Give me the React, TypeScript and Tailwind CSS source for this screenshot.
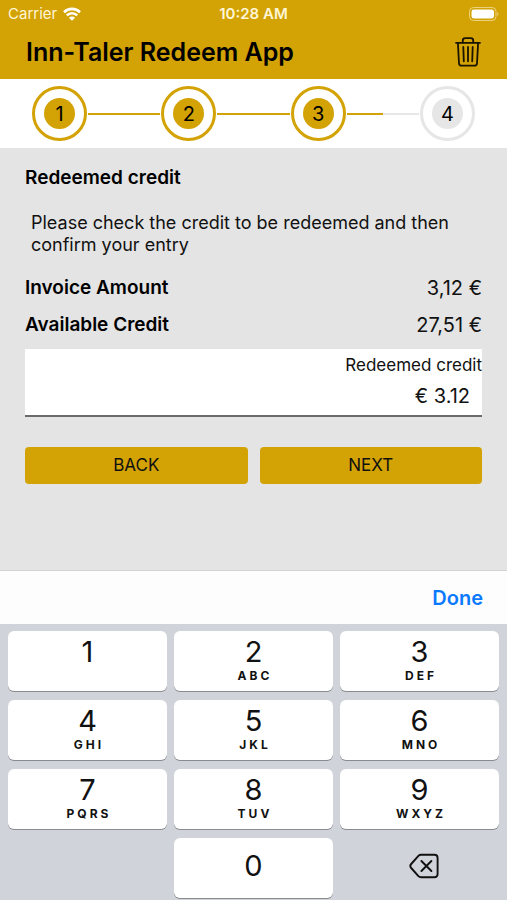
import { Fragment } from 'react'

const KEYS = [
  { digit: '1', letters: '' },
  { digit: '2', letters: 'ABC' },
  { digit: '3', letters: 'DEF' },
  { digit: '4', letters: 'GHI' },
  { digit: '5', letters: 'JKL' },
  { digit: '6', letters: 'MNO' },
  { digit: '7', letters: 'PQRS' },
  { digit: '8', letters: 'TUV' },
  { digit: '9', letters: 'WXYZ' },
]

const STEPS = [
  { n: 1, done: true },
  { n: 2, done: true },
  { n: 3, done: true },
  { n: 4, done: false },
]

function StatusBar() {
  return (
    <div className="grid grid-cols-3 items-center h-7 px-2 text-[15px] text-[#fff6d6]">
      <div className="flex items-center gap-[6px]">
        <span>Carrier</span>
        <svg width="18" height="14" viewBox="0 0 18 14" fill="none" stroke="#fff" strokeWidth="2.6">
          <path d="M1 5.2a11.4 11.4 0 0 1 16 0" />
          <path d="M3.8 8.4a7.3 7.3 0 0 1 10.4 0" />
          <path d="M9 13.8 5.9 10.7a4.4 4.4 0 0 1 6.200 0z" fill="#fff" stroke="none" />
        </svg>
      </div>
      <span className="text-center font-semibold whitespace-nowrap">10:28 AM</span>
      <svg className="justify-self-end" width="30" height="14" viewBox="0 0 30 14">
        <rect x="0.5" y="0.5" width="26.5" height="13" rx="4" fill="none" stroke="#ecd27e" />
        <rect x="2.5" y="2.5" width="22.500" height="9" rx="2.4" fill="#fff" />
        <path d="M28.300 5c1.500.6 1.500 3.400 0 4z" fill="#ecd27e" />
      </svg>
    </div>
  )
}

function TrashIcon() {
  return (
    <svg width="26" height="30" viewBox="0 0 26 30" fill="none" stroke="#1a1400" strokeWidth="1.8" strokeLinecap="round" strokeLinejoin="round">
      <path d="M1 5.8h24" />
      <path d="M7.800 5.600V3.600C7.800 2 8.800 1.200 10.200 1.200h5.600c1.400 0 2.400.8 2.400 2.400v2" />
      <path d="M2.900 6 4 26.200c.1 1.700 1 2.500 2.600 2.500h12.800c1.600 0 2.500-.8 2.600-2.500L23.100 6" />
      <path d="M8.300 10 8.800 24.300M13 10v14.300M17.700 10l-.5 14.300" strokeWidth="1.800" />
    </svg>
  )
}

function Stepper() {
  return (
    <ol className="flex items-center bg-white px-8 py-[7px]">
      {STEPS.map((s) => (
        <Fragment key={s.n}>
          {s.n > 1 && (
            <li aria-hidden="true" className="flex flex-1 mx-px">
              <span className="h-[2px] flex-1 bg-[#d3a204]" />
              {!s.done && <span className="h-[2px] flex-1 bg-[#e6e6e6]" />}
            </li>
          )}
          <li
            className={`flex items-center justify-center size-[55px] rounded-full border-3 ${
              s.done ? 'border-[#d3a204]' : 'border-[#e6e6e6]'
            }`}
          >
            <span
              className={`flex items-center justify-center size-[31px] rounded-full text-xl text-black ${
                s.done ? 'bg-[#d3a204]' : 'bg-[#e6e6e6]'
              }`}
            >
              {s.n}
            </span>
          </li>
        </Fragment>
      ))}
    </ol>
  )
}

function Keypad() {
  const key = 'flex flex-col items-center h-[60px] rounded-md bg-white shadow-[0_1px_0_#898b8f]'
  return (
    <div className="grid grid-cols-3 gap-x-[7px] gap-y-[9px] bg-[#d0d3da] px-2 pt-[7px] pb-[2px]">
      {KEYS.map((k) => (
        <button key={k.digit} className={key}>
          <span className="pt-[3px] text-[29px] leading-9">{k.digit}</span>
          <span className="pl-[3px] text-xs leading-3 font-bold tracking-[3px]">{k.letters}</span>
        </button>
      ))}
      <span />
      <button className={`${key} justify-center pb-1`}>
        <span className="text-[29px] leading-9">0</span>
      </button>
      <button aria-label="Delete" className="flex items-center justify-center h-[60px] pl-2 pb-1">
        <svg width="30" height="26" viewBox="0 0 30 26" fill="none" stroke="#111" strokeWidth="1.9" strokeLinecap="round" strokeLinejoin="round">
          <path d="M12 1.800H25.400c2 0 3.200 1.200 3.200 3.200v16c0 2-1.200 3.200-3.200 3.200H12c-1 0-1.900-.4-2.600-1.100L2.200 15c-1.200-1.300-1.200-2.700 0-4l7.200-8.100c.7-.7 1.600-1.100 2.600-1.100z" />
          <path d="m12.400 8 10 10M22.400 8l-10 10" />
        </svg>
      </button>
    </div>
  )
}

export default function App() {
  return (
    <div className="flex flex-col min-h-screen bg-[#e4e4e4] text-[#111] font-['Inter','Liberation_Sans',sans-serif]">
      <header className="bg-[#d3a204]">
        <StatusBar />
        <div className="flex items-center justify-between h-[51px] px-[26px] pb-1">
          <h1 className="text-[25px] leading-8 font-semibold text-black">Inn-Taler Redeem App</h1>
          <button aria-label="Delete entry">
            <TrashIcon />
          </button>
        </div>
      </header>

      <Stepper />

      <main className="flex-1 px-[25px] pt-[18px]">
        <h2 className="text-[19px] leading-6 font-semibold text-black">Redeemed credit</h2>
        <p className="px-[6px] pt-[22px] pb-5 text-lg leading-[22px]">
          Please check the credit to be redeemed and then confirm your entry
        </p>
        <dl className="grid grid-cols-[1fr_auto] gap-y-[13px] items-center leading-6">
          <dt className="text-[19px] font-semibold text-black">Invoice Amount</dt>
          <dd className="text-xl leading-6 text-right">3,12 €</dd>
          <dt className="text-[19px] font-semibold text-black">Available Credit</dt>
          <dd className="text-xl leading-6 text-right">27,51 €</dd>
        </dl>

        <div className="flex flex-col mt-3 pt-1 bg-white border-b-2 border-[#6b6b6b]">
          <label htmlFor="credit" className="text-right text-[17px] leading-6">
            Redeemed credit
          </label>
          <input
            id="credit"
            inputMode="decimal"
            defaultValue="€ 3.12"
            className="w-full h-[38px] px-3 text-right text-xl outline-none"
          />
        </div>

        <div className="grid grid-cols-2 gap-3 mt-[30px]">
          <button className="h-[37px] rounded-[4px] bg-[#d3a204] text-[17px]">BACK</button>
          <button className="h-[37px] rounded-[4px] bg-[#d3a204] text-[17px]">NEXT</button>
        </div>
      </main>

      <div className="flex items-center justify-end h-[54px] px-6 bg-[#fdfdfd] border-t border-[#d4d4d4]">
        <button className="text-xl font-semibold text-[#0a7aff]">Done</button>
      </div>
      <Keypad />
    </div>
  )
}
